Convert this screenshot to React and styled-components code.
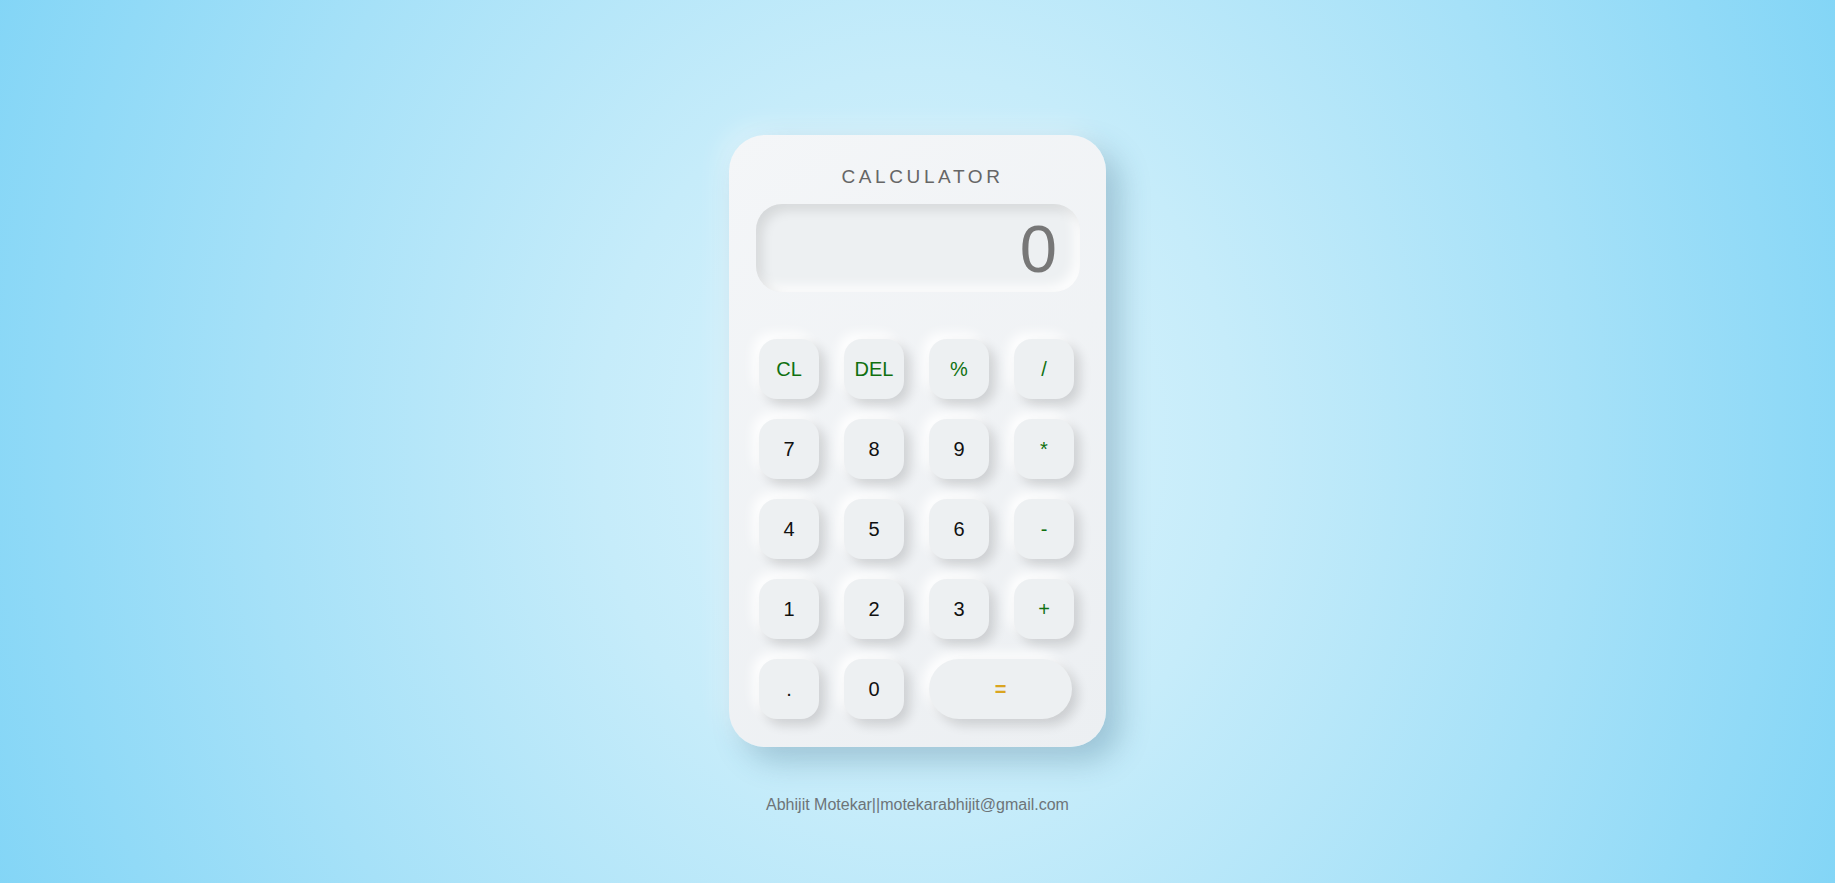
import React, { useState } from "react";
import styled, { createGlobalStyle } from "styled-components";

const GlobalStyle = createGlobalStyle`
  * {
    box-sizing: border-box;
  }
  body {
    margin: 0;
    font-family: "Liberation Sans", Arial, sans-serif;
  }
`;

const keys = [
  { label: "CL", kind: "op" },
  { label: "DEL", kind: "op" },
  { label: "%", kind: "op" },
  { label: "/", kind: "op" },
  { label: "7" },
  { label: "8" },
  { label: "9" },
  { label: "*", kind: "op" },
  { label: "4" },
  { label: "5" },
  { label: "6" },
  { label: "-", kind: "op" },
  { label: "1" },
  { label: "2" },
  { label: "3" },
  { label: "+", kind: "op" },
  { label: "." },
  { label: "0" },
  { label: "=", kind: "equal" },
];

const App = () => {
  const [value, setValue] = useState("0");

  const handleKey = (label) => {
    if (label === "CL") return setValue("0");
    if (label === "DEL") return setValue(value.length > 1 ? value.slice(0, -1) : "0");
    if (label === "=") {
      try {
        // eslint-disable-next-line no-new-func
        const res = Function(`return (${value.replace(/%/g, "/100")})`)();
        setValue(String(res));
      } catch (e) {
        setValue("0");
      }
      return;
    }
    setValue(value === "0" && label !== "." ? label : value + label);
  };

  return (
    <Page>
      <GlobalStyle />
      <Card>
        <Title>CALCULATOR</Title>
        <Display>{value}</Display>
        <Keypad>
          {keys.map((k) => (
            <Key
              key={k.label}
              kind={k.kind}
              wide={k.kind === "equal"}
              onClick={() => handleKey(k.label)}
            >
              {k.label}
            </Key>
          ))}
        </Keypad>
      </Card>
      <Footer>Abhijit Motekar||motekarabhijit@gmail.com</Footer>
    </Page>
  );
};

export default App;

const Page = styled.div`
  min-height: 100vh;
  display: flex;
  flex-direction: column;
  align-items: center;
  padding-top: 135px;
  background: radial-gradient(
    ellipse 58% 140% at 50% 50%,
    #dcf4fd 0%,
    #c6ecfa 30%,
    #a6e1f8 62%,
    #7cd3f6 100%
  );
`;

const Card = styled.div`
  width: 377px;
  padding: 30px 26px 28px 27px;
  border-radius: 36px;
  background: linear-gradient(145deg, #f4f6f8, #eceff2);
  box-shadow: 14px 14px 30px rgba(40, 90, 120, 0.28),
    -8px -8px 24px rgba(255, 255, 255, 0.35);
  display: flex;
  flex-direction: column;
  align-items: stretch;
`;

const Title = styled.h1`
  margin: 0;
  text-align: center;
  font-size: 19px;
  font-weight: normal;
  letter-spacing: 3.6px;
  line-height: 23px;
  color: #666;
  padding-left: 9px;
`;

const Display = styled.div`
  margin-top: 16px;
  height: 88px;
  border-radius: 26px;
  background: #edf0f2;
  box-shadow: inset 6px 6px 12px rgba(0, 0, 0, 0.1),
    inset -6px -6px 12px rgba(255, 255, 255, 0.9);
  display: flex;
  align-items: center;
  justify-content: flex-end;
  padding: 0 23px;
  font-size: 67px;
  color: #777;
  overflow: hidden;
  white-space: nowrap;
`;

const Keypad = styled.div`
  margin: 47px 0 0 3px;
  display: grid;
  grid-template-columns: repeat(4, 60px);
  grid-auto-rows: 60px;
  column-gap: 25px;
  row-gap: 20px;
  justify-content: start;
`;

const keyColor = (kind) => {
  if (kind === "op") return "#107010";
  if (kind === "equal") return "#daa520";
  return "#111";
};

const Key = styled.button`
  grid-column: ${(props) => (props.wide ? "span 2" : "auto")};
  width: ${(props) => (props.wide ? "143px" : "60px")};
  border: none;
  outline: none;
  cursor: pointer;
  border-radius: ${(props) => (props.wide ? "30px" : "18px")};
  background: #edf0f2;
  box-shadow: 6px 6px 12px rgba(0, 0, 0, 0.14),
    -6px -6px 12px rgba(255, 255, 255, 0.95);
  font-family: "Liberation Sans", Arial, sans-serif;
  font-size: 20px;
  font-weight: ${(props) => (props.kind === "equal" ? "bold" : "normal")};
  color: ${(props) => keyColor(props.kind)};
  display: flex;
  align-items: center;
  justify-content: center;
  padding: 0;

  &:active {
    box-shadow: inset 4px 4px 8px rgba(0, 0, 0, 0.12),
      inset -4px -4px 8px rgba(255, 255, 255, 0.9);
  }
`;

const Footer = styled.p`
  margin: 49px 0 0;
  font-size: 16px;
  color: #6d7478;
`;
